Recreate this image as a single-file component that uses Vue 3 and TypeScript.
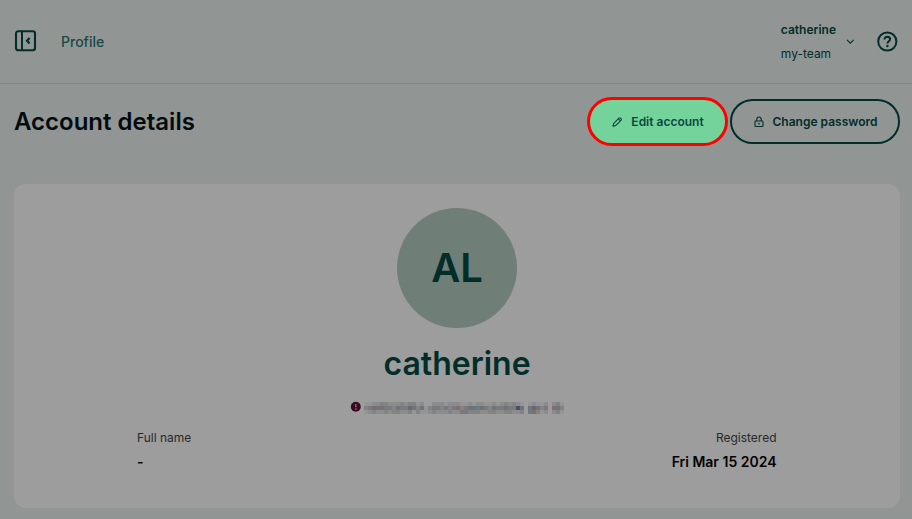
<script setup lang="ts">
interface Cell { color: string }

const user = { name: 'catherine', team: 'my-team', initials: 'AL', fullName: '-', registered: 'Fri Mar 15 2024' }

// Shade levels of the redacted address, 0 = card colour, 7 = darkest; four pixels per cell.
const rows: string[] = [
  '11223322232331200222122211212211212323210121120231',
  '34545443544653513443434434554543544544750565340453',
  '12322323322313112322232244333223322332230443120231',
]
const tints: string[] = ['#9d9d9d', '#959595', '#8b8c8e', '#828385', '#797a7e', '#707479', '#696975', '#485060']
const warm: string = '#866d66'
const cool: string = '#647d86'

const cells: Cell[] = rows.flatMap((row, r) =>
  [...row].map((level, c) => {
    const n = Number(level)
    if (n === 4 && (c + r) % 4 === 0) return { color: warm }
    if (n === 4 && (c + r) % 7 === 1) return { color: cool }
    return { color: tints[n] }
  }),
)
</script>

<template>
  <div class="page">
    <header class="topbar">
      <svg class="panel-icon" viewBox="0 0 24 24" fill="none">
        <rect x="2" y="2.3" width="19" height="19" rx="2.2" stroke="currentColor" stroke-width="2.1" />
        <path d="M8 2.3v19" stroke="currentColor" stroke-width="2" />
        <path d="M15.6 9 13 11.8l2.6 2.8" stroke="currentColor" stroke-width="2.2" />
      </svg>
      <span class="crumb">Profile</span>
      <div class="account">
        <div class="identity">
          <strong>{{ user.name }}</strong>
          <span>{{ user.team }}</span>
        </div>
        <svg class="chevron" viewBox="0 0 10 6" fill="none"><path d="m2 .8 3.3 3.3L8.6.8" stroke="currentColor" stroke-width="1.1" /></svg>
      </div>
      <svg class="help" viewBox="0 0 22 22" fill="none">
        <circle cx="11.3" cy="10.5" r="9.1" stroke="currentColor" stroke-width="2" />
        <path d="M8.5 8.4c0-1.6 1.2-2.7 2.8-2.7s2.8 1 2.8 2.5c0 2-2.7 2.2-2.7 4.4" stroke="currentColor" stroke-width="2" />
        <circle cx="11.4" cy="15" r="1.2" fill="currentColor" />
      </svg>
    </header>

    <section class="heading">
      <h1>Account details</h1>
      <div class="actions">
        <button class="btn edit">
          <svg viewBox="0 0 12 12" fill="none" stroke="currentColor" stroke-width="1.1" stroke-linejoin="round">
            <path d="m2 10.2.6-2.6L7.9 2.2c.5-.5 1.1-.5 1.6 0l.5.5c.5.5.5 1.1 0 1.6L4.6 9.6l-2.6.6ZM7.3 2.9l2 2" />
          </svg>
          <span>Edit account</span>
        </button>
        <button class="btn password">
          <svg viewBox="0 0 12 12" fill="none" stroke="currentColor" stroke-width="1.1">
            <rect x="2" y="5" width="8" height="5.5" rx=".8" />
            <path d="M3.8 5V3.2a2.2 2.2 0 0 1 4.4 0V5" />
            <path d="M5.3 7.8h1.4" stroke-width="1.4" />
          </svg>
          <span>Change password</span>
        </button>
      </div>
    </section>

    <main class="card">
      <div class="avatar">{{ user.initials }}</div>
      <h2>{{ user.name }}</h2>
      <div class="email">
        <svg class="alert" viewBox="0 0 12 12">
          <circle cx="5.8" cy="4.7" r="5" fill="#3a0a24" />
          <path d="M5.8 1.9v3.4M5.8 6.3v1.4" stroke="#88757f" stroke-width="1.3" />
        </svg>
        <div class="redacted">
          <i v-for="(cell, i) in cells" :key="i" :style="{ background: cell.color }"></i>
        </div>
      </div>
      <dl class="facts">
        <div><dt>Full name</dt><dd>{{ user.fullName }}</dd></div>
        <div class="right"><dt>Registered</dt><dd>{{ user.registered }}</dd></div>
      </dl>
    </main>
  </div>
</template>

<style>
body { margin: 0; background: #919694; }
</style>

<style scoped>
.page { box-sizing: border-box; width: 912px; height: 519px; overflow: hidden; background: #919694; color: #032d29; font-family: Inter, sans-serif; }
.topbar { box-sizing: border-box; height: 84px; padding: 0 14px; display: flex; align-items: center; border-bottom: 1px solid #7e8787; }
.panel-icon { width: 24px; height: 24px; margin-top: -1px; }
.crumb { margin-left: 23px; font-size: 14px; font-weight: 500; line-height: 20px; color: #194845; }
.account { margin-left: auto; display: flex; align-items: center; gap: 9px; }
.identity { display: flex; flex-direction: column; font-size: 12px; line-height: 24px; }
.identity strong { font-weight: 600; }
.chevron { width: 10px; height: 6px; }
.help { width: 22px; height: 22px; margin-left: 21px; }
.heading { height: 100px; padding: 13px 12px 0 14px; box-sizing: border-box; display: flex; justify-content: space-between; align-items: flex-start; }
h1 { margin: 9px 0 0; color: #020b10; font-size: 24px; line-height: 32px; font-weight: 600; }
.actions { display: flex; gap: 2px; }
.btn { box-sizing: border-box; display: flex; align-items: center; justify-content: center; padding: 0; gap: 8px; font: 600 12px/20px Inter, sans-serif; }
.btn svg { width: 12px; height: 12px; }
.edit { width: 141px; height: 49px; border: 3px solid #ff0000; border-radius: 25px; background: #74d39b; color: #07483f; }
.password { width: 170px; height: 45px; margin-top: 2px; border: 2px solid #032d29; border-radius: 23px; background: transparent; color: #032d29; }
.card { box-sizing: border-box; width: 886px; height: 324px; margin-left: 14px; padding-top: 24px; border-radius: 12px; background: #9d9d9d; display: flex; flex-direction: column; align-items: center; }
.avatar { box-sizing: border-box; width: 120px; height: 120px; padding-bottom: 2px; border-radius: 50%; background: #707e78; display: flex; align-items: center; justify-content: center; font-size: 40px; font-weight: 600; }
h2 { margin: 16px 0 0; font-size: 32px; line-height: 40px; font-weight: 600; }
.email { display: flex; align-items: center; margin-top: 18px; gap: 2px; }
.alert { width: 12px; height: 12px; overflow: visible; }
.redacted { display: grid; grid-template-columns: repeat(50, 4px); grid-auto-rows: 4px; }
.facts { width: 640px; margin: 12px 0 0; display: flex; justify-content: space-between; }
.facts dt { color: #292929; font-size: 12px; line-height: 24px; }
.facts dd { margin: 0; color: #020202; font-size: 14px; line-height: 24px; font-weight: 600; }
.right { text-align: right; padding-right: .5px; }
</style>
